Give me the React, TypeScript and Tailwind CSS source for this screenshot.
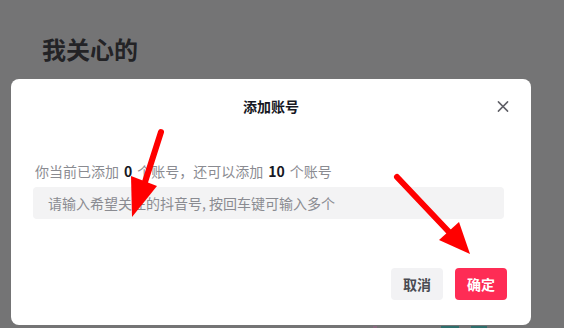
import React from 'react';

const font = { fontFamily: '"Noto Sans CJK SC", "Noto Sans", sans-serif' };

const Arrows: React.FC = () => (
  <svg className="pointer-events-none absolute left-0 top-0" width={564} height={328} viewBox="0 0 564 328">
    <line x1={161} y1={132} x2={145} y2={182} stroke="#ff0000" strokeWidth={6} strokeLinecap="round" />
    <polygon points="131,176 157,186 132,217" fill="#ff0000" />
    <line x1={397} y1={177} x2={450} y2={233} stroke="#ff0000" strokeWidth={6} strokeLinecap="round" />
    <polygon points="439,240 459,222 470,254" fill="#ff0000" />
  </svg>
);

export default function App() {
  return (
    <div className="relative h-[328px] w-[564px] overflow-hidden bg-[#747475]" style={font}>
      <h1 className="pl-[42px] pt-[34px] text-[24px] font-bold leading-[30px] text-[#232326]">我关心的</h1>

      <div className="ml-[11px] mt-[15px] flex h-[246px] w-[520px] flex-col rounded-lg bg-white">
        <div className="relative flex h-[54px] items-center justify-center">
          <span className="text-[14px] font-semibold text-[#161823]">添加账号</span>
          <button className="absolute right-[22px] top-[21px] flex h-3 w-3 items-center justify-center">
            <svg width={13} height={13} viewBox="0 0 13 13">
              <path d="M1.5 1.5 L11.5 11.5 M11.5 1.5 L1.5 11.5" stroke="#5f5f66" strokeWidth={1.6} strokeLinecap="round" />
            </svg>
          </button>
        </div>

        <div className="pl-[24px] pr-[28px]">
          <p className="mt-[28px] text-[14px] leading-[20px] text-[#8a8b91]">
            你当前已添加<span className="px-[5px] font-bold text-[#161823]">0</span>个账号，还可以添加
            <span className="px-[5px] font-bold text-[#161823]">10</span>个账号
          </p>
        </div>

        <div className="ml-[22px] mt-[6px] flex h-[32px] w-[471px] items-center rounded bg-[#f3f3f4] pl-[15px]">
          <span className="text-[14px] text-[#8a8b91]">请输入希望关注的抖音号, 按回车键可输入多个</span>
        </div>

        <div className="mt-[49px] flex justify-end gap-3 pr-[24px]">
          <button className="flex h-[32px] w-[52px] items-center justify-center rounded bg-[#f2f2f4] text-[14px] font-bold text-[#4a4b52]">
            取消
          </button>
          <button className="flex h-[32px] w-[52px] items-center justify-center rounded bg-[#fe2c55] text-[14px] font-bold text-white">
            确定
          </button>
        </div>
      </div>

      <div className="mt-[1px] flex h-[3px]">
        <div className="ml-[373px] h-[3px] w-[4px] bg-[#8a6a80]" />
        <div className="ml-[64px] h-[3px] w-[18px] bg-[#2f6f6d]" />
        <div className="ml-[12px] h-[3px] w-[16px] bg-[#2f6f6d]" />
      </div>

      <Arrows />
    </div>
  );
}
